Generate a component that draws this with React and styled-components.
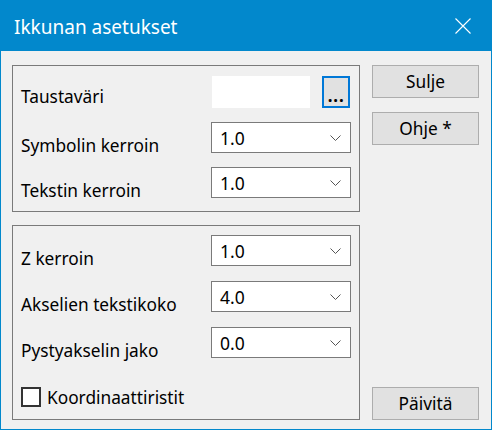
import React from "react";
import styled, { createGlobalStyle } from "styled-components";

const Global = createGlobalStyle`
  html, body {
    margin: 0;
    padding: 0;
    background: #f0f0f0;
  }
  body {
    font-family: "Noto Sans", "Open Sans", sans-serif;
  }
`;

const Window = styled.div`
  width: 492px;
  height: 430px;
  box-sizing: border-box;
  border: 1px solid #0288cc;
  border-top: none;
  background: #f0f0f0;
  display: flex;
  flex-direction: column;
`;

const TitleBar = styled.div`
  height: 51px;
  flex: none;
  background: #0288cc;
  color: #fff;
  display: flex;
  align-items: center;
  justify-content: space-between;
  padding: 3px 20px 0 13px;
  box-sizing: border-box;
`;

const Title = styled.div`
  font-size: 19px;
  line-height: 24px;
`;

const CloseIcon = styled.svg`
  width: 16px;
  height: 16px;
  margin-top: -2px;
`;

const Body = styled.div`
  flex: 1;
  display: flex;
  gap: 12px;
  padding: 14px 11px 9px 11px;
  min-height: 0;
`;

const LeftColumn = styled.div`
  width: 348px;
  display: flex;
  flex-direction: column;
  gap: 13px;
`;

const Group = styled.div`
  border: 1px solid #7a7a7a;
  display: flex;
  flex-direction: column;
  gap: ${(p) => p.$gap}px;
  padding: ${(p) => p.$pad};
  flex: ${(p) => (p.$grow ? 1 : "none")};
`;

const Row = styled.div`
  display: flex;
  height: ${(p) => p.$h}px;
`;

const Label = styled.div`
  width: 190px;
  flex: none;
  align-self: flex-end;
  font-size: 17.3px;
  line-height: 20px;
  color: #000;
  margin-bottom: ${(p) => p.$mb}px;
`;

const Controls = styled.div`
  width: 140px;
  display: flex;
  align-items: stretch;
`;

const Combo = styled.div`
  flex: 1;
  box-sizing: border-box;
  border: 1px solid #7a7a7a;
  background: #fff;
  display: flex;
  align-items: center;
  justify-content: space-between;
  padding: 0 9px 0 8px;
  font-size: 17.5px;
  color: #000;
`;

const Chevron = styled.svg`
  width: 11px;
  height: 6px;
  margin-top: 1px;
`;

const Swatch = styled.div`
  width: 98px;
  margin-left: 1px;
  background: #fff;
`;

const DotsButton = styled.div`
  width: 28px;
  margin-left: 12px;
  box-sizing: border-box;
  border: 2px solid #0078d7;
  background: #e1e1e1;
  display: flex;
  align-items: center;
  justify-content: center;
  font-size: 19px;
  font-weight: 600;
  padding-top: 5px;
  letter-spacing: 0.5px;
`;

const CheckRow = styled.label`
  display: flex;
  align-items: center;
  gap: 6px;
  margin-top: auto;
  font-size: 17.3px;
  height: 20px;
`;

const CheckBox = styled.span`
  width: 20px;
  height: 20px;
  box-sizing: border-box;
  border: 2px solid #333;
  background: #fff;
  flex: none;
`;

const SideColumn = styled.div`
  width: 107px;
  display: flex;
  flex-direction: column;
  gap: 14px;
`;

const Button = styled.div`
  height: 33px;
  box-sizing: border-box;
  border: 1px solid #adadad;
  background: #e1e1e1;
  display: flex;
  align-items: center;
  justify-content: center;
  font-size: 17.3px;
  color: #000;
  margin-top: ${(p) => (p.$bottom ? "auto" : "0")};
`;

const Dropdown = ({ value }) => (
  <Combo>
    <span>{value}</span>
    <Chevron viewBox="0 0 11 6">
      <path d="M0.5 0.5 L5.5 5.5 L10.5 0.5" fill="none" stroke="#555" strokeWidth="1" />
    </Chevron>
  </Combo>
);

export default function App() {
  return (
    <>
      <Global />
      <Window>
        <TitleBar>
          <Title>Ikkunan asetukset</Title>
          <CloseIcon viewBox="0 0 16 16">
            <path d="M0.5 0.5 L15.5 15.5 M15.5 0.5 L0.5 15.5" stroke="#fff" strokeWidth="1.1" />
          </CloseIcon>
        </TitleBar>
        <Body>
          <LeftColumn>
            <Group $gap={14} $pad="10px 8px 13px 8px">
              <Row $h={32}>
                <Label $mb={1}>Taustaväri</Label>
                <Controls>
                  <Swatch />
                  <DotsButton>...</DotsButton>
                </Controls>
              </Row>
              <Row $h={31}>
                <Label $mb={-3}>Symbolin kerroin</Label>
                <Controls>
                  <Dropdown value="1.0" />
                </Controls>
              </Row>
              <Row $h={31}>
                <Label $mb={-3}>Tekstin kerroin</Label>
                <Controls>
                  <Dropdown value="1.0" />
                </Controls>
              </Row>
            </Group>
            <Group $grow $gap={15} $pad="9px 8px 12px 8px">
              <Row $h={31}>
                <Label $mb={-3}>Z kerroin</Label>
                <Controls>
                  <Dropdown value="1.0" />
                </Controls>
              </Row>
              <Row $h={31}>
                <Label $mb={-3}>Akselien tekstikoko</Label>
                <Controls>
                  <Dropdown value="4.0" />
                </Controls>
              </Row>
              <Row $h={31}>
                <Label $mb={-3}>Pystyakselin jako</Label>
                <Controls>
                  <Dropdown value="0.0" />
                </Controls>
              </Row>
              <CheckRow>
                <CheckBox />
                Koordinaattiristit
              </CheckRow>
            </Group>
          </LeftColumn>
          <SideColumn>
            <Button>Sulje</Button>
            <Button>Ohje *</Button>
            <Button $bottom>Päivitä</Button>
          </SideColumn>
        </Body>
      </Window>
    </>
  );
}
